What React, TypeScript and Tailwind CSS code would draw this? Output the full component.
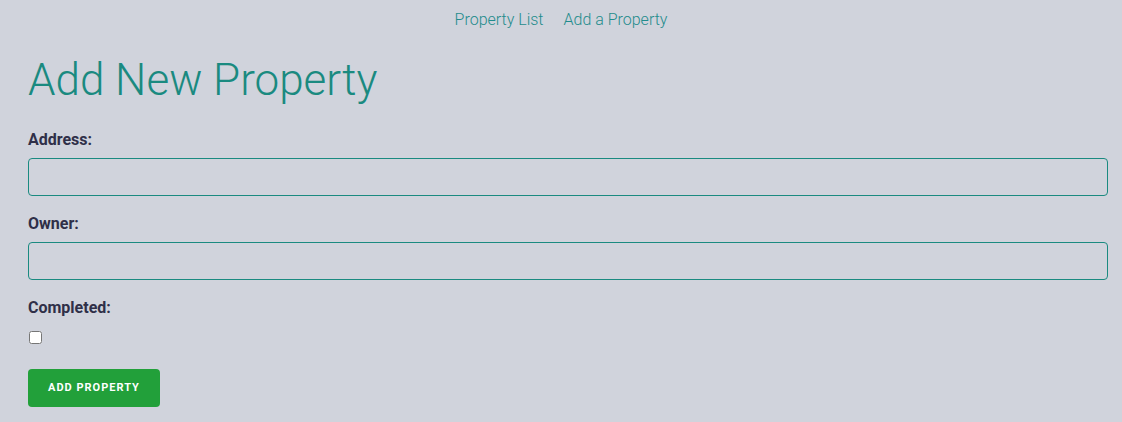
import React from "react";

export default function App() {
  return (
    <div className="min-h-[422px] w-full bg-[#d0d3dc] font-['Roboto',sans-serif]">
      <nav className="flex justify-center gap-[20px] pt-[9px] text-[16px] font-light text-[#1f8c8c]">
        <a href="#" className="leading-[22px]">Property List</a>
        <a href="#" className="leading-[22px]">Add a Property</a>
      </nav>
      <div className="pl-[28px] pr-[14px]">
        <h1 className="mt-[22px] text-[44px] font-light leading-[54px] text-[#1a8a80]">Add New Property</h1>
        <form className="mt-[23px] flex flex-col">
          <label className="text-[16px] font-bold leading-[20px] text-[#2f2f48]">Address:</label>
          <input className="mt-[8px] h-[38px] rounded-[4px] border border-[#1a8a80] bg-transparent outline-none" />
          <label className="mt-[18px] text-[16px] font-bold leading-[20px] text-[#2f2f48]">Owner:</label>
          <input className="mt-[8px] h-[38px] rounded-[4px] border border-[#1a8a80] bg-transparent outline-none" />
          <label className="mt-[18px] text-[16px] font-bold leading-[20px] text-[#2f2f48]">Completed:</label>
          <div className="mt-[13px] flex">
            <input type="checkbox" className="ml-[1px] h-[13px] w-[13px]" />
          </div>
          <div className="mt-[25px] flex">
            <button type="button" className="h-[38px] w-[132px] rounded-[4px] bg-[#22a03a] text-[11px] font-bold tracking-[1px] text-white">ADD PROPERTY</button>
          </div>
        </form>
      </div>
    </div>
  );
}
